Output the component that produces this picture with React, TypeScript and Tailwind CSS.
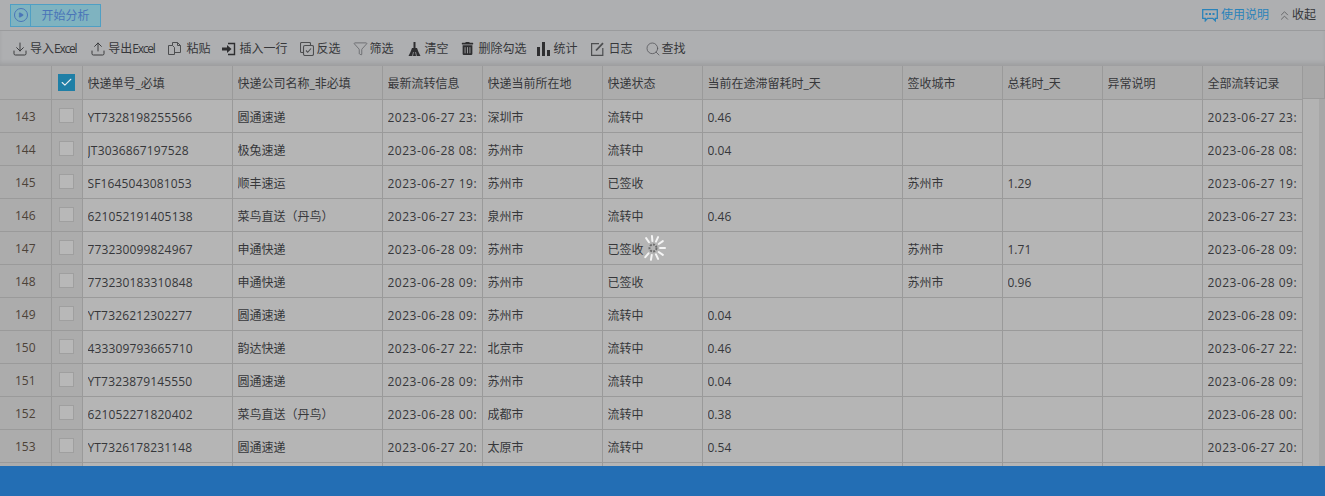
import React from "react";
import { Download, Upload, Check, ChevronsUp, Play, Search, Filter } from "lucide-react";
import { FaTrashAlt } from "react-icons/fa";

const FONT = "font-['Open_Sans','Noto_Sans_CJK_SC',sans-serif]";

function FilesIcon() {
  return (
    <svg width="15" height="15" viewBox="0 0 15 15" fill="none" stroke="#4d4e50" strokeWidth="1">
      <path d="M1.5 4.5h4l2 2v7h-6z" />
      <path d="M5.5 4.5v-3h5l3 3v7h-6" />
      <path d="M10.5 1.5v3h3" />
    </svg>
  );
}
function InsertIcon() {
  return (
    <svg width="14" height="14" viewBox="0 0 14 14" fill="none">
      <path d="M6 1.5h6.5v11H6" stroke="#2e2e30" strokeWidth="1.4" />
      <path d="M0 5.5h5V3l4.5 4L5 11V8.5H0z" fill="#2e2e30" />
    </svg>
  );
}
function InvertIcon() {
  return (
    <svg width="14" height="14" viewBox="0 0 14 14" fill="none" stroke="#4d4e50" strokeWidth="1.1">
      <path d="M3 10.5H1.5a1 1 0 0 1-1-1v-8a1 1 0 0 1 1-1h8a1 1 0 0 1 1 1V3" />
      <rect x="3.5" y="3.5" width="10" height="10" rx="1.5" />
      <path d="M6 8.5l1.7 1.8L11 6.5" />
    </svg>
  );
}
function BroomIcon() {
  return (
    <svg width="13" height="14" viewBox="0 0 13 14" fill="#2e2e30">
      <rect x="5.5" y="0" width="2" height="6" />
      <path d="M4 6h5l1.5 4 2 4H0.5l2-4z" />
      <path d="M4.5 14l1-4M8.5 14l-1-4" stroke="#aeafb1" strokeWidth="0.7" />
    </svg>
  );
}
function BarsIcon() {
  return (
    <svg width="13" height="14" viewBox="0 0 13 14" fill="#2e2e30">
      <rect x="0" y="5" width="3" height="9" />
      <rect x="5" y="0" width="3" height="14" />
      <rect x="10" y="8" width="3" height="6" />
    </svg>
  );
}
function LogIcon() {
  return (
    <svg width="13" height="14" viewBox="0 0 13 14" fill="none" stroke="#4d4e50" strokeWidth="1.2">
      <path d="M8 1.6H.6v11.8h11.2V6" />
      <path d="M5 8.5L12 1.2" strokeWidth="1.8" />
    </svg>
  );
}
function ChatIcon() {
  return (
    <svg width="16" height="13" viewBox="0 0 16 13" fill="none">
      <path d="M.7.7h14.6v8.6h-2v2.5l-2.6-2.5H5.5L3.3 11.8V9.3H.7z" stroke="#2a83ba" strokeWidth="1.3" />
      <rect x="3.5" y="4" width="2" height="2" fill="#2a83ba" />
      <rect x="7" y="4" width="2" height="2" fill="#2a83ba" />
      <rect x="10.5" y="4" width="2" height="2" fill="#2a83ba" />
    </svg>
  );
}
function Spinner() {
  const bars = [-35, -5, 25, 55, 90, 125, 155, 190, 220];
  return (
    <svg width="30" height="30" viewBox="0 0 30 30" className="absolute left-[638px] top-[233px]">
      {bars.map((a) => (
        <line key={a} x1="15" y1="8" x2="15" y2="3" stroke="#f4f4f4" strokeWidth="2" strokeLinecap="round" transform={`rotate(${a} 15 15)`} />
      ))}
      <circle cx="15" cy="15" r="3.5" fill="none" stroke="#6e6e6e" strokeWidth="2" strokeDasharray="2 1.2" />
    </svg>
  );
}

const tools = [
  { icon: <Download size={16} strokeWidth={1.5} color="#3c3d3f" />, text: "导入", excel: true, box: "w-[18px]", mr: "mr-[14px]" },
  { icon: <Upload size={16} strokeWidth={1.5} color="#3c3d3f" />, text: "导出", excel: true, box: "w-[18px]", mr: "mr-[13px]" },
  { icon: <FilesIcon />, text: "粘贴", box: "w-[19px]", mr: "mr-[12px]" },
  { icon: <InsertIcon />, text: "插入一行", box: "w-[17px]", mr: "mr-[12px]" },
  { icon: <InvertIcon />, text: "反选", box: "w-[17px]", mr: "mr-[12px]" },
  { icon: <Filter size={15} strokeWidth={1.1} color="#55565a" />, text: "筛选", box: "w-[17px]", mr: "mr-[14px]" },
  { icon: <BroomIcon />, text: "清空", box: "w-[17px]", mr: "mr-[12px]" },
  { icon: <FaTrashAlt size={13} color="#2e2e30" />, text: "删除勾选", box: "w-[18px]", mr: "mr-[10px]" },
  { icon: <BarsIcon />, text: "统计", box: "w-[17px]", mr: "mr-[13px]" },
  { icon: <LogIcon />, text: "日志", box: "w-[18px]", mr: "mr-[12px]" },
  { icon: <Search size={16} strokeWidth={1.2} color="#55565a" />, text: "查找", box: "w-[17px]", mr: "mr-0" },
];

const cols: { title: string; w: string }[] = [
  { title: "快递单号_必填", w: "w-[150px]" },
  { title: "快递公司名称_非必填", w: "w-[150px]" },
  { title: "最新流转信息", w: "w-[100px]" },
  { title: "快递当前所在地", w: "w-[120px]" },
  { title: "快递状态", w: "w-[100px]" },
  { title: "当前在途滞留耗时_天", w: "w-[200px]" },
  { title: "签收城市", w: "w-[100px]" },
  { title: "总耗时_天", w: "w-[100px]" },
  { title: "异常说明", w: "w-[100px]" },
  { title: "全部流转记录", w: "w-[100px]" },
];

const rows: string[][] = [
  ["143", "YT7328198255566", "圆通速递", "2023-06-27 23:", "深圳市", "流转中", "0.46", "", "", "", "2023-06-27 23:"],
  ["144", "JT3036867197528", "极兔速递", "2023-06-28 08:", "苏州市", "流转中", "0.04", "", "", "", "2023-06-28 08:"],
  ["145", "SF1645043081053", "顺丰速运", "2023-06-27 19:", "苏州市", "已签收", "", "苏州市", "1.29", "", "2023-06-27 19:"],
  ["146", "621052191405138", "菜鸟直送（丹鸟）", "2023-06-27 23:", "泉州市", "流转中", "0.46", "", "", "", "2023-06-27 23:"],
  ["147", "773230099824967", "申通快递", "2023-06-28 09:", "苏州市", "已签收", "", "苏州市", "1.71", "", "2023-06-28 09:"],
  ["148", "773230183310848", "申通快递", "2023-06-28 09:", "苏州市", "已签收", "", "苏州市", "0.96", "", "2023-06-28 09:"],
  ["149", "YT7326212302277", "圆通速递", "2023-06-28 09:", "苏州市", "流转中", "0.04", "", "", "", "2023-06-28 09:"],
  ["150", "433309793665710", "韵达快递", "2023-06-27 22:", "北京市", "流转中", "0.46", "", "", "", "2023-06-27 22:"],
  ["151", "YT7323879145550", "圆通速递", "2023-06-28 09:", "苏州市", "流转中", "0.04", "", "", "", "2023-06-28 09:"],
  ["152", "621052271820402", "菜鸟直送（丹鸟）", "2023-06-28 00:", "成都市", "流转中", "0.38", "", "", "", "2023-06-28 00:"],
  ["153", "YT7326178231148", "圆通速递", "2023-06-27 20:", "太原市", "流转中", "0.54", "", "", "", "2023-06-27 20:"],
  ["", "", "", "", "", "", "", "", "", "", ""],
];

export default function App() {
  return (
    <div className={`${FONT} relative flex h-[496px] w-[1325px] flex-col overflow-hidden bg-[#aeafb1] text-xs text-[#36373a]`}>
      <div className="flex h-[31px] shrink-0 items-center justify-between border-b border-[#9a9b9d] pl-2.5 pr-[9px]">
        <div className="flex h-[23px] w-[91px] items-stretch border border-[#4f9fc4] bg-[#7fb3c0]">
          <div className="flex w-[20px] items-center justify-center border-r border-[#4f9fc4]">
            <span className="flex h-[14px] w-[14px] items-center justify-center rounded-full border border-[#4a75b8]">
              <Play size={6} fill="#4a75b8" color="#4a75b8" />
            </span>
          </div>
          <span className="flex-1 text-center leading-[21px] text-[#4a75b8]">开始分析</span>
        </div>
        <div className="flex items-center">
          <ChatIcon />
          <span className="ml-[3px] text-[#2a83ba]">使用说明</span>
          <ChevronsUp size={15} strokeWidth={1.2} color="#505153" className="ml-[8px]" />
          <span>收起</span>
        </div>
      </div>
      <div className="flex h-[35px] shrink-0 items-center pl-3 shadow-[inset_0_-4px_4px_-1px_rgba(0,0,0,0.1)]">
        {tools.map((t) => (
          <div key={t.text} className={`flex items-center ${t.mr}`}>
            <span className={`flex items-center ${t.box}`}>{t.icon}</span>
            <span>
              {t.text}
              {t.excel ? <span className="tracking-[-1.25px]">Excel</span> : null}
            </span>
          </div>
        ))}
      </div>
      <div className="flex min-h-0 flex-1 overflow-hidden">
        <table className="h-min w-[1302px] shrink-0 table-fixed border-collapse">
          <colgroup>
            <col className="w-[51px]" />
            <col className="w-[31px]" />
            {cols.map((c) => (
              <col key={c.title} className={c.w} />
            ))}
          </colgroup>
          <thead>
            <tr className="h-[33px] bg-[#acacac]">
              <th className="border border-l-0 border-t-0 border-[#9a9a9a]" />
              <th className="border border-t-0 border-[#9a9a9a]">
                <span className="mx-auto flex h-[17px] w-[17px] items-center justify-center bg-[#1f7fa6]">
                  <Check size={13} color="#e8edf0" strokeWidth={2} />
                </span>
              </th>
              {cols.map((c) => (
                <th key={c.title} className="border border-t-0 border-[#9a9a9a] pl-[5px] pr-[5px] pt-[4px] text-left font-normal">
                  <div className="overflow-hidden whitespace-nowrap">{c.title}</div>
                </th>
              ))}
            </tr>
          </thead>
          <tbody>
            {rows.map((r, ri) => (
              <tr key={ri} className="h-[33px] bg-[#b5b5b5]">
                <td className="border border-l-0 border-[#9a9a9a] bg-[#acacac] pt-[2px] text-center text-[#4c4238]">{r[0]}</td>
                <td className="border border-[#9a9a9a] bg-[#acacac]">
                  <span className="mx-auto block h-[15px] w-[15px] border border-[#9f9f9f] bg-[#b8b8b8]" />
                </td>
                {r.slice(1).map((v, i) => (
                  <td key={i} className="border border-[#9a9a9a] pl-[5px] pr-[5px] pt-[4px]">
                    <div className={`overflow-hidden whitespace-nowrap ${i === 2 || i === 9 ? "tracking-[0.5px]" : i === 0 ? "tracking-[0.15px]" : "tracking-normal"}`}>{v}</div>
                  </td>
                ))}
              </tr>
            ))}
          </tbody>
        </table>
        <div className="flex min-w-0 flex-1 flex-col">
          <div className="h-[33px] shrink-0 border-b border-r border-[#9a9a9a] bg-[#a8a8a8]" />
          <div className="flex flex-1 bg-[#b3b3b3]">
            <div className="ml-auto w-[6px] bg-[#a7a7a7]" />
          </div>
        </div>
      </div>
      <div className="h-[30px] shrink-0 bg-[#236eb4]" />
      <Spinner />
    </div>
  );
}
